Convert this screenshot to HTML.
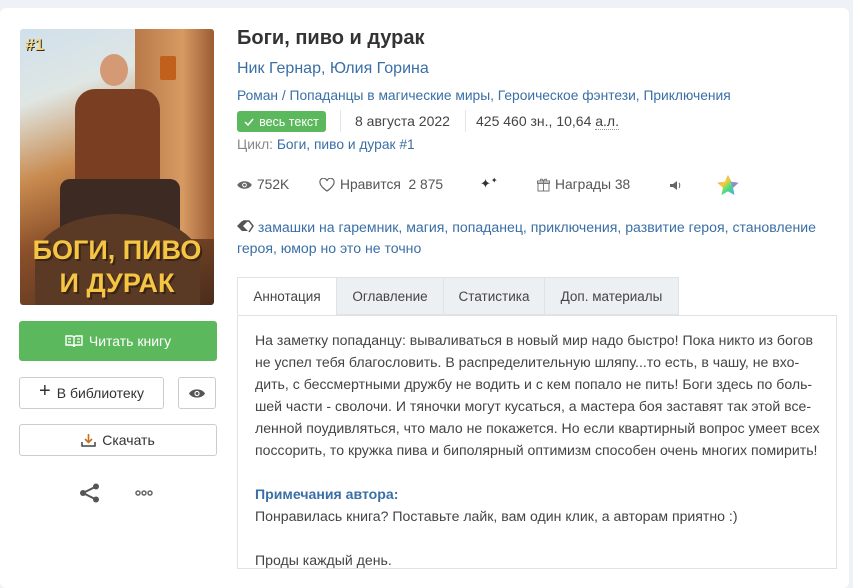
<!DOCTYPE html>
<html><head><meta charset="utf-8"><style>
*{box-sizing:border-box;margin:0;padding:0}
body{width:853px;height:575px;background:#eef1f5;font-family:"Liberation Sans",sans-serif;color:#444;position:relative;overflow:hidden}
.card{position:absolute;left:0;top:8px;width:849px;height:580px;background:#fff;border-radius:6px}
.abs{position:absolute;white-space:nowrap}
a,.lk{color:#3a6fa6;text-decoration:none}
.btn{position:absolute;border:1px solid #ccc;border-radius:3px;background:#fff;font-size:14px;color:#333;display:flex;align-items:center;justify-content:center;gap:6px}
.tab{position:absolute;top:277px;height:38px;background:#ecf0f2;border:1px solid #dde3e6;font-size:13.5px;color:#444;display:flex;align-items:center;justify-content:center}
.txt{position:absolute;left:255px;top:329px;font-size:14.1px;line-height:22px;color:#444;white-space:nowrap;letter-spacing:0}
</style></head><body>
<div class="card"></div>

<!-- cover -->
<div class="abs" style="left:20px;top:29px;width:194px;height:276px;border-radius:3px;overflow:hidden;background:linear-gradient(160deg,#cfe0ec 0%,#dfe6e4 22%,#c88a4e 45%,#8a4f2a 65%,#4a2c1c 100%)">
 <div style="position:absolute;left:115px;top:0;width:79px;height:210px;background:linear-gradient(90deg,#b9794a,#d69a62 60%,#9c5b34)"></div>
 <div style="position:absolute;left:55px;top:60px;width:85px;height:95px;background:#7a3f22;border-radius:20px 20px 6px 6px"></div>
 <div style="position:absolute;left:80px;top:25px;width:28px;height:32px;background:#d49a76;border-radius:50%"></div>
 <div style="position:absolute;left:140px;top:27px;width:16px;height:24px;background:#c1601c;border-radius:2px"></div>
 <div style="position:absolute;left:40px;top:150px;width:120px;height:60px;background:#3d2a22;border-radius:10px"></div>
 <div style="position:absolute;left:15px;top:185px;width:165px;height:91px;background:#5a3a25;border-radius:50% 50% 0 0"></div>
 <div style="position:absolute;left:5px;top:6px;font:bold 17px 'Liberation Sans';color:#f2d98a;text-shadow:1px 1px 0 #3a2a1a">#1</div>
 <div style="position:absolute;left:0;width:194px;top:205px;text-align:center;font:900 27px/33px 'Liberation Sans';color:#f6c543;text-shadow:2px 2px 0 #3a2414">БОГИ, ПИВО<br>И ДУРАК</div>
</div>

<!-- left buttons -->
<div class="btn" style="left:19px;top:321px;width:198px;height:40px;background:#5cb85c;border-color:#5cb85c;color:#fff">
 <svg width="18" height="14" viewBox="0 0 18 14"><path d="M1 2h6c1 0 2 1 2 2v9c0-1-1-2-2-2H1z M17 2h-6c-1 0-2 1-2 2v9c0-1 1-2 2-2h6z" fill="none" stroke="#fff" stroke-width="1.4"/><path d="M3 5h3M3 8h3M12 5h3M12 8h3" stroke="#fff" stroke-width="1.2"/></svg>Читать книгу</div>
<div class="btn" style="left:19px;top:377px;width:145px;height:32px"><span style="font-size:20px;font-weight:300;margin-top:-3px">+</span>В библиотеку</div>
<div class="btn" style="left:178px;top:377px;width:38px;height:32px">
 <svg width="16" height="11" viewBox="0 0 16 11"><path d="M0 5.5C3 0 13 0 16 5.5 13 11 3 11 0 5.5z" fill="#555"/><circle cx="8" cy="5.5" r="2.6" fill="#fff"/><circle cx="8" cy="5.5" r="1.5" fill="#555"/></svg></div>
<div class="btn" style="left:19px;top:424px;width:198px;height:32px">
 <svg width="15" height="14" viewBox="0 0 15 14"><path d="M7.5 1v8M4 6l3.5 3.5L11 6" stroke="#c9701c" stroke-width="1.6" fill="none"/><path d="M1 9v4h13V9" stroke="#444" stroke-width="1.5" fill="none"/></svg>Скачать</div>
<svg class="abs" style="left:79px;top:483px" width="22" height="20" viewBox="0 0 22 20"><circle cx="17" cy="3.5" r="3" fill="#555"/><circle cx="4" cy="10" r="3" fill="#555"/><circle cx="17" cy="16.5" r="3" fill="#555"/><path d="M17 3.5L4 10l13 6.5" stroke="#555" stroke-width="2" fill="none"/></svg>
<svg class="abs" style="left:135px;top:490px" width="18" height="6" viewBox="0 0 18 6"><circle cx="3" cy="3" r="2" fill="none" stroke="#666" stroke-width="1.5"/><circle cx="9" cy="3" r="2" fill="none" stroke="#666" stroke-width="1.5"/><circle cx="15" cy="3" r="2" fill="none" stroke="#666" stroke-width="1.5"/></svg>

<!-- header info -->
<div class="abs" style="left:237px;top:27px;font-size:20px;font-weight:bold;color:#333">Боги, пиво и дурак</div>
<div class="abs lk" style="left:237px;top:60px;font-size:16px">Ник Гернар, Юлия Горина</div>
<div class="abs lk" style="left:237px;top:88px;font-size:13.8px">Роман / Попаданцы в магические миры, Героическое фэнтези, Приключения</div>
<div class="abs" style="left:237px;top:111px;width:89px;height:21px;background:#5cb85c;border-radius:3px;color:#fff;font-size:12.5px;display:flex;align-items:center;justify-content:center;gap:5px"><svg width="10" height="8" viewBox="0 0 10 8"><path d="M1 4l3 3 5-6" stroke="#fff" stroke-width="1.5" fill="none"/></svg>весь текст</div>
<div class="abs" style="left:340px;top:110px;width:1px;height:22px;background:#e3e6e8"></div>
<div class="abs" style="left:355px;top:113px;font-size:14px;color:#444">8 августа 2022</div>
<div class="abs" style="left:465px;top:110px;width:1px;height:22px;background:#e3e6e8"></div>
<div class="abs" style="left:476px;top:113px;font-size:14px;color:#444">425 460 зн., 10,64 <span style="border-bottom:1px dotted #999">а.л.</span></div>
<div class="abs" style="left:237px;top:137px;font-size:13.8px;color:#888">Цикл: <span class="lk">Боги, пиво и дурак #1</span></div>

<!-- stats -->
<div class="abs" style="left:237px;top:177px;font-size:13.8px;color:#555;display:flex;align-items:center;gap:5px"><svg width="15" height="10" viewBox="0 0 16 11"><path d="M0 5.5C3 0 13 0 16 5.5 13 11 3 11 0 5.5z" fill="#666"/><circle cx="8" cy="5.5" r="2.6" fill="#fff"/><circle cx="8" cy="5.5" r="1.5" fill="#666"/></svg>752K</div>
<div class="abs" style="left:319px;top:177px;font-size:13.8px;color:#555;display:flex;align-items:center;gap:5px"><svg width="16" height="14" viewBox="0 0 16 14"><path d="M8 13S1 8.5 1 4.5A3.5 3.5 0 0 1 8 3a3.5 3.5 0 0 1 7 1.5C15 8.5 8 13 8 13z" fill="none" stroke="#666" stroke-width="1.2"/></svg>Нравится&nbsp; 2 875</div>
<div class="abs" style="left:480px;top:176px;font-size:13px;color:#333">✦<span style="font-size:8px;vertical-align:top">✦</span></div>
<div class="abs" style="left:537px;top:177px;font-size:13.8px;color:#555;display:flex;align-items:center;gap:5px"><svg width="13" height="14" viewBox="0 0 13 14"><rect x="1" y="5" width="11" height="8" fill="none" stroke="#777"/><rect x="0.5" y="3" width="12" height="2.5" fill="none" stroke="#777"/><path d="M6.5 3v10M6.5 3C5 0 2 1 4 3M6.5 3C8 0 11 1 9 3" stroke="#777" fill="none"/></svg>Награды 38</div>
<svg class="abs" style="left:670px;top:180px" width="12" height="11" viewBox="0 0 12 11"><path d="M0 4h3l4-3v9L3 7H0z" fill="#666"/><path d="M9 3c1 1 1 4 0 5" stroke="#666" fill="none"/></svg>
<svg class="abs" style="left:717px;top:175px" width="22" height="21" viewBox="0 0 22 21"><defs><linearGradient id="g" x1="0" y1="0" x2="1" y2="1"><stop offset="0" stop-color="#f44"/><stop offset=".35" stop-color="#fc3"/><stop offset=".6" stop-color="#4d8"/><stop offset="1" stop-color="#68f"/></linearGradient></defs><path d="M11 0l3.2 6.8 7.3.9-5.4 5 1.4 7.3L11 16.4 4.5 20l1.4-7.3-5.4-5 7.3-.9z" fill="url(#g)"/><path d="M11 0l3.2 6.8 7.3.9-5.4 5z" fill="#c4f" opacity=".5"/></svg>

<!-- tags -->
<div class="abs" style="left:237px;top:217px;font-size:14.1px;line-height:21px"><svg width="17" height="13" viewBox="0 0 17 13" style="vertical-align:-1px"><path d="M0 6L5 1h6l-5 5 5 5H5z" fill="#555"/><path d="M6 1h6l4 5-4 6" fill="none" stroke="#555" stroke-width="1.5"/></svg> <span class="lk">замашки на гаремник, магия, попаданец, приключения, развитие героя, становление</span><br><span class="lk">героя, юмор но это не точно</span></div>

<!-- tabs -->
<div class="abs" style="left:237px;top:315px;width:600px;height:254px;border:1px solid #dde3e6"></div>
<div class="tab" style="left:237px;width:100px;background:#fff;border-bottom-color:#fff">Аннотация</div>
<div class="tab" style="left:336px;width:108px">Оглавление</div>
<div class="tab" style="left:443px;width:102px">Статистика</div>
<div class="tab" style="left:544px;width:135px">Доп. материалы</div>

<div class="txt">На заметку попаданцу: вываливаться в новый мир надо быстро! Пока никто из богов<br>не успел тебя благословить. В распределительную шляпу...то есть, в чашу, не вхо-<br>дить, с бессмертными дружбу не водить и с кем попало не пить! Боги здесь по боль-<br>шей части - сволочи. И тяночки могут кусаться, а мастера боя заставят так этой все-<br>ленной поудивляться, что мало не покажется. Но если квартирный вопрос умеет всех<br>поссорить, то кружка пива и биполярный оптимизм способен очень многих помирить!<br><br><b style="color:#3a6fa6">Примечания автора:</b><br>Понравилась книга? Поставьте лайк, вам один клик, а авторам приятно :)<br><br>Проды каждый день.</div>
</body></html>
